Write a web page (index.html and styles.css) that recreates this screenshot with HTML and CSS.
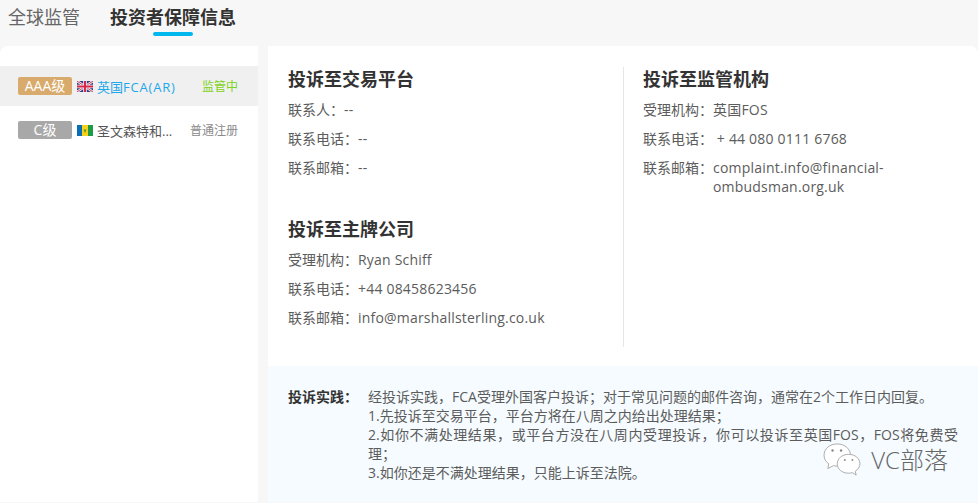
FILE: index.html
```html
<!DOCTYPE html>
<html lang="zh-CN">
<head>
<meta charset="utf-8">
<title>投资者保障信息</title>
<link rel="stylesheet" href="styles.css">
</head>
<body>
<div class="page">
  <nav class="tabs">
    <span class="tab">全球监管</span>
    <span class="tab tab-active">投资者保障信息</span>
  </nav>
  <div class="main">
    <aside class="side">
      <div class="row row-active">
        <span class="grade grade-gold">AAA级</span>
        <svg class="flag" viewBox="0 0 16 11"><rect width="16" height="11" fill="#2b3f86"/><path d="M0 0L16 11M16 0L0 11" stroke="#f3eef0" stroke-width="2.4"/><path d="M0 0L16 11M16 0L0 11" stroke="#d5415c" stroke-width="1"/><path d="M8 0V11M0 5.5H16" stroke="#f3eef0" stroke-width="3.6"/><path d="M8 0V11M0 5.5H16" stroke="#d5284a" stroke-width="2"/></svg>
        <span class="name name-link">英国<span class="latin">FCA(AR)</span></span>
        <span class="status status-ok">监管中</span>
      </div>
      <div class="row row-second">
        <span class="grade grade-gray">C级</span>
        <svg class="flag" viewBox="0 0 16 11"><rect width="16" height="11" fill="#f7d117"/><rect width="5" height="11" fill="#0a6db5"/><rect x="11" width="5" height="11" fill="#1f9a46"/><path d="M6.600 4.500h1.200l.2 3 .2-3h1.200L8 8z" fill="#2f8a3c"/></svg>
        <span class="name">圣文森特和...</span>
        <span class="status">普通注册</span>
      </div>
    </aside>
    <div class="content">
      <div class="columns">
        <div class="col col-left">
          <section class="block">
            <h2 class="title">投诉至交易平台</h2>
            <p class="line"><span class="label">联系人：</span><span class="value">--</span></p>
            <p class="line"><span class="label">联系电话：</span><span class="value">--</span></p>
            <p class="line"><span class="label">联系邮箱：</span><span class="value">--</span></p>
          </section>
          <section class="block block-second">
            <h2 class="title">投诉至主牌公司</h2>
            <p class="line"><span class="label">受理机构：</span><span class="value">Ryan Schiff</span></p>
            <p class="line"><span class="label">联系电话：</span><span class="value">+44 08458623456</span></p>
            <p class="line"><span class="label">联系邮箱：</span><span class="value">info@marshallsterling.co.uk</span></p>
          </section>
        </div>
        <div class="col col-right">
          <section class="block">
            <h2 class="title">投诉至监管机构</h2>
            <p class="line"><span class="label">受理机构：</span><span class="value">英国FOS</span></p>
            <p class="line"><span class="label">联系电话：</span><span class="value">&nbsp;+ 44 080 0111 6768</span></p>
            <p class="line"><span class="label">联系邮箱：</span><span class="value">complaint.info@financial-<br>ombudsman.org.uk</span></p>
          </section>
        </div>
      </div>
      <div class="practice">
        <strong class="practice-label">投诉实践：</strong>
        <div class="practice-text">经投诉实践，FCA受理外国客户投诉；对于常见问题的邮件咨询，通常在2个工作日内回复。<br>1.先投诉至交易平台，平台方将在八周之内给出处理结果；<br>2.如你不满处理结果，或平台方没在八周内受理投诉，你可以投诉至英国FOS，FOS将免费受理；<br>3.如你还是不满处理结果，只能上诉至法院。</div>
        <div class="mark">
          <svg class="mark-icon" viewBox="0 0 40 36" fill="#fff" stroke="#a8a8a8" stroke-width="1"><path d="M15 1C7 1 1 6 1 13c0 4 2 7 5 9l-1 5 6-3c1 0 2 .5 4 .5 8 0 14-5 14-11.500S23 1 15 1z"/><path d="M27 12c-7 0-12 4.500-12 10s5 10 12 10c1.500 0 3-.3 4-.6l4 2.600-1-4c3-2 5-5 5-8 0-5.500-5-10-12-10z"/><g fill="#8a8a8a" stroke="none"><circle cx="10" cy="8" r="1.300"/><circle cx="19" cy="8" r="1.300"/><circle cx="23" cy="18" r="1"/><circle cx="31" cy="18" r="1"/></g></svg>
          <span class="mark-text">VC部落</span>
        </div>
      </div>
    </div>
  </div>
</div>
</body>
</html>
```
FILE: styles.css
```css
* { box-sizing: border-box; }
html, body { margin: 0; padding: 0; }
body {
  width: 978px;
  height: 503px;
  overflow: hidden;
  background: #f7f7f7;
  font-family: "Open Sans", "Noto Sans CJK SC", sans-serif;
  color: #5c5c5c;
}
.page { display: flex; flex-direction: column; height: 503px; }
.tabs {
  height: 46px;
  display: flex;
  gap: 30px;
  padding: 4px 0 0 8px;
  align-items: flex-start;
}
.tab { font-size: 18px; line-height: 26px; color: #666; position: relative; }
.tab-active { font-weight: 700; color: #333; }
.tab-active::after {
  content: "";
  position: absolute;
  left: 43px;
  top: 28px;
  width: 40px;
  height: 4px;
  border-radius: 2px;
  background: #00b7ee;
}
.main { flex: 1; display: flex; gap: 10px; }
.side {
  width: 258px;
  height: 456px;
  background: #fff;
  border-radius: 8px 0 0 0;
  padding-top: 20px;
}
.row {
  height: 40px;
  display: flex;
  align-items: center;
  padding: 0 20px 0 18px;
  font-size: 13px;
}
.row-active { background: #f0f0f0; }
.row-second { margin-top: 4px; }
.grade {
  width: 54px;
  height: 18px;
  border-radius: 2px;
  color: #fff;
  font-size: 14px;
  line-height: 18px;
  text-align: center;
  flex: none;
}
.grade-gold { background: #d8ab6c; }
.grade-gray { background: #a8a8a8; }
.flag { width: 16px; height: 11px; margin-left: 5px; flex: none; }
.name { margin-left: 4px; flex: 1; white-space: nowrap; color: #555; }
.name-link { color: #1ea7ea; }
.latin { letter-spacing: .8px; }
.status { color: #8a8a8a; white-space: nowrap; font-size: 12px; }
.status-ok { color: #7ed321; }
.content { width: 710px; height: 456px; display: flex; flex-direction: column; }
.columns {
  height: 320px;
  background: #fff;
  display: flex;
  padding: 21px 0 0 20px;
  border-radius: 0 8px 0 0;
}
.col { height: 280px; }
.col-left { width: 336px; border-right: 1px solid #e6e6e6; }
.col-right { padding-left: 19px; flex: 1; }
.block-second { margin-top: 40px; }
.title {
  margin: 0 0 9px;
  font-size: 18px;
  line-height: 24px;
  font-weight: 700;
  color: #333;
}
.line {
  margin: 0 0 10px;
  font-size: 14px;
  line-height: 19px;
  display: flex;
  width: 290px;
}
.label { flex: none; }
.value { letter-spacing: .2px; }
.practice {
  flex: 1;
  background: #f5fbff;
  display: flex;
  padding: 21px 20px 0 20px;
  font-size: 14px;
  line-height: 19px;
  position: relative;
}
.practice-label { flex: none; width: 80px; color: #333; }
.practice-text { width: 591px; color: #5c5c5c; text-align: justify; }
.mark {
  position: absolute;
  right: 30px;
  top: 77px;
  display: flex;
  align-items: center;
  gap: 9px;
}
.mark-icon { width: 40px; height: 34px; }
.mark-text { font-size: 24px; line-height: 28px; color: #666; font-weight: 300; }
```
